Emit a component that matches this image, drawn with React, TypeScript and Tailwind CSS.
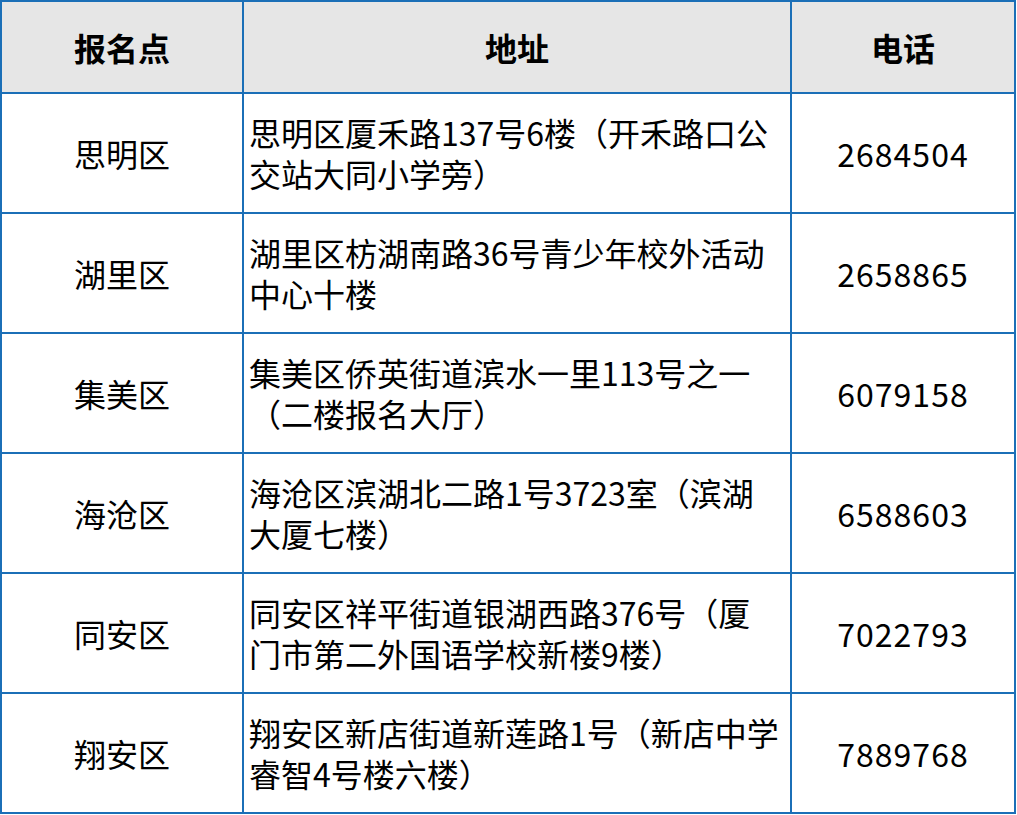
import React from 'react';

const rows = [
  { area: '思明区', addr: ['思明区厦禾路137号6楼（开禾路口公', '交站大同小学旁）'], tel: '2684504' },
  { area: '湖里区', addr: ['湖里区枋湖南路36号青少年校外活动', '中心十楼'], tel: '2658865' },
  { area: '集美区', addr: ['集美区侨英街道滨水一里113号之一', '（二楼报名大厅）'], tel: '6079158' },
  { area: '海沧区', addr: ['海沧区滨湖北二路1号3723室（滨湖', '大厦七楼）'], tel: '6588603' },
  { area: '同安区', addr: ['同安区祥平街道银湖西路376号（厦', '门市第二外国语学校新楼9楼）'], tel: '7022793' },
  { area: '翔安区', addr: ['翔安区新店街道新莲路1号（新店中学', '睿智4号楼六楼）'], tel: '7889768' },
];

const cell = 'border-r-2 border-b-2 border-[#1b6fb7] flex items-center';

export default function App() {
  return (
    <div className="w-[1017px] h-[815px] bg-white text-black text-[32px] font-['Noto_Sans_CJK_SC','Noto_Sans',sans-serif]">
      <div className="grid grid-cols-[242px_548px_224px] grid-rows-[92px_repeat(6,120px)] border-l-2 border-t-2 border-[#1b6fb7] w-[1016px]">
        <div className={`${cell} justify-center bg-[#e6e6e6] font-bold`}>报名点</div>
        <div className={`${cell} justify-center bg-[#e6e6e6] font-bold`}>地址</div>
        <div className={`${cell} justify-center bg-[#e6e6e6] font-bold`}>电话</div>
        {rows.map((r) => (
          <React.Fragment key={r.area}>
            <div className={`${cell} justify-center`}>{r.area}</div>
            <div className={`${cell} pl-[5px] whitespace-nowrap leading-[41px]`}>
              <div>
                {r.addr[0]}
                <br />
                {r.addr[1]}
              </div>
            </div>
            <div className={`${cell} justify-center tracking-[1px]`}>{r.tel}</div>
          </React.Fragment>
        ))}
      </div>
    </div>
  );
}
